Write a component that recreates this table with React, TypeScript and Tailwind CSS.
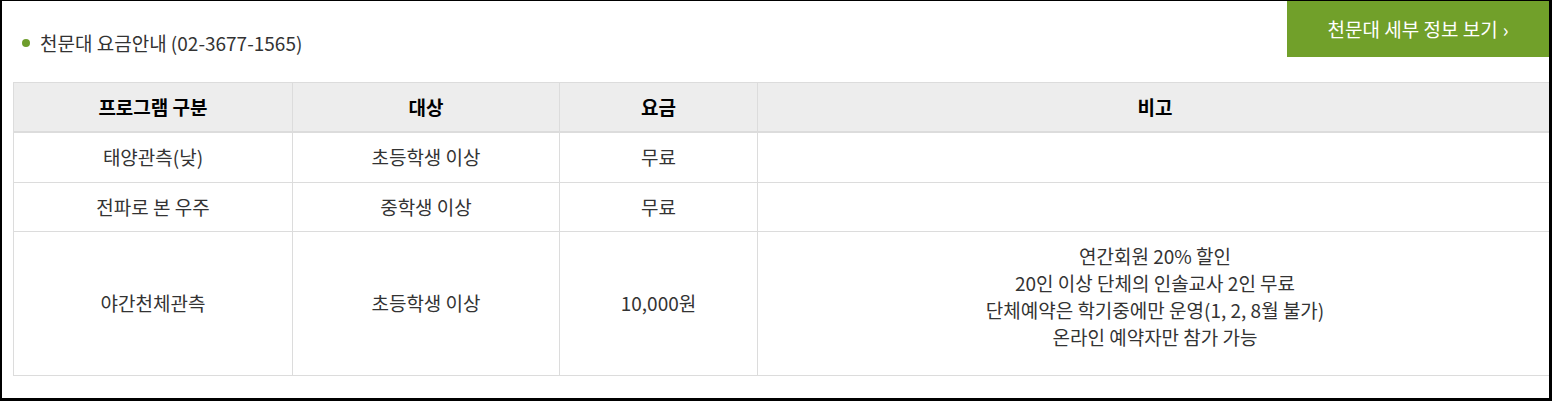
import React from "react";

interface FeeRow {
  program: string;
  target: string;
  fee: string;
  notes: string[];
  height: string;
}

const rows: FeeRow[] = [
  { program: "태양관측(낮)", target: "초등학생 이상", fee: "무료", notes: [], height: "h-[50px]" },
  { program: "전파로 본 우주", target: "중학생 이상", fee: "무료", notes: [], height: "h-[49px]" },
  {
    program: "야간천체관측",
    target: "초등학생 이상",
    fee: "10,000원",
    notes: [
      "연간회원 20% 할인",
      "20인 이상 단체의 인솔교사 2인 무료",
      "단체예약은 학기중에만 운영(1, 2, 8월 불가)",
      "온라인 예약자만 참가 가능",
    ],
    height: "h-[144px]",
  },
];

const cols = "grid grid-cols-[279px_267px_198px_1fr]";

const App: React.FC = () => {
  return (
    <div
      className="w-[1552px] h-[401px] overflow-hidden bg-white border-l-2 border-t border-r-[3px] border-b-[3px] border-black text-[#333]"
      style={{ fontFamily: '"Noto Sans CJK KR", "Noto Sans", sans-serif' }}
    >
      <div className="flex justify-between items-start">
        <div className="flex items-center mt-[29px] ml-[20px]">
          <span className="w-[8px] h-[8px] rounded-full bg-[#6e9d2c] mr-[10px]" />
          <h2 className="text-[19px] leading-[26px]">천문대 요금안내 (02-3677-1565)</h2>
        </div>
        <a
          href="#"
          className="w-[262px] h-[56px] bg-[#71a02a] text-white text-[19px] flex items-center justify-center gap-[5px]"
        >
          천문대 세부 정보 보기 <span className="text-[19px]">›</span>
        </a>
      </div>

      <div className="ml-[11px] mt-[25px] w-[1540px] border-t border-l border-[#dcdcdc]">
        <div className={`${cols} h-[50px] bg-[#ededed] text-black font-bold text-[19px]`}>
          {["프로그램 구분", "대상", "요금", "비고"].map((h) => (
            <div
              key={h}
              className="flex items-center justify-center border-r border-b-2 border-[#dcdcdc]"
            >
              {h}
            </div>
          ))}
        </div>
        {rows.map((r) => (
          <div key={r.program} className={`${cols} ${r.height} text-[19px]`}>
            <div className="flex items-center justify-center border-r border-b border-[#dcdcdc]">
              {r.program}
            </div>
            <div className="flex items-center justify-center border-r border-b border-[#dcdcdc]">
              {r.target}
            </div>
            <div className="flex items-center justify-center border-r border-b border-[#dcdcdc]">
              {r.fee}
            </div>
            <div className="flex flex-col items-center justify-center pb-[16px] border-r border-b border-[#dcdcdc] leading-[27px]">
              {r.notes.map((n) => (
                <p key={n}>{n}</p>
              ))}
            </div>
          </div>
        ))}
      </div>
    </div>
  );
};

export default App;
